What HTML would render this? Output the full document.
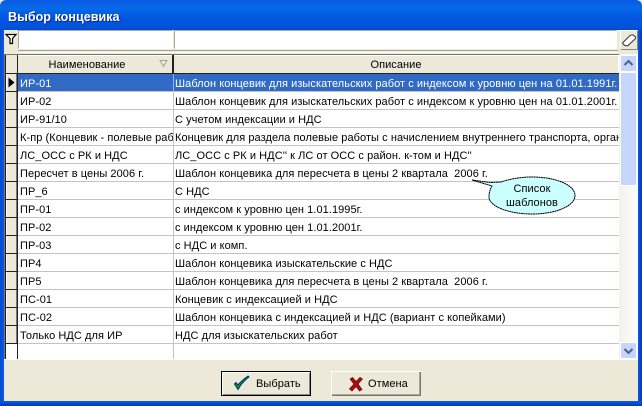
<!DOCTYPE html>
<html><head><meta charset="utf-8">
<style>
html,body{margin:0;padding:0;width:642px;height:406px;overflow:hidden;background:#ece9d8}
*{box-sizing:border-box}
body{position:relative;font:11px "Liberation Sans",sans-serif;letter-spacing:.06px;color:#000}
div{position:absolute}
.t{white-space:nowrap;overflow:hidden;height:18px;line-height:20px}
.a{left:20px;width:153px}
.b{left:175px;width:444px}
.l{left:18px;width:601px;height:1px;background:#c4c4c4}
.i{left:6px;width:11px;height:17px;background:#ece9d8;border-right:1px solid #777;border-left:1px solid #fff}
.k{left:5px;width:13px;height:1px;background:#222}
</style></head><body>
<div style="left:0;top:0;width:642px;height:30px;background:linear-gradient(#0a5ae0 0,#0a5fe8 3px,#046be8 8px,#0355e0 18px,#0252dc 27px,#0349cc 30px);border-radius:6px 6px 0 0"></div>
<div style="left:0;top:30px;width:4px;height:376px;background:linear-gradient(90deg,#0048c8,#0a5ae8)"></div>
<div style="left:638px;top:30px;width:4px;height:376px;background:linear-gradient(90deg,#0a5ae8,#0038b0)"></div>
<div style="left:0;top:401px;width:642px;height:5px;background:linear-gradient(#0a5ae8,#0038b0)"></div>
<div style="left:8px;top:8px;font:bold 12.5px 'Liberation Sans',sans-serif;color:#fff;text-shadow:1px 1px 0 #0a2a90;line-height:18px">Выбор концевика</div>

<svg style="position:absolute;left:4px;top:31px" width="14" height="16"><path d="M2 3.5H12L8.5 7.5V12.5H6V7.5Z" fill="#fff" stroke="#000" stroke-width="1.2"/></svg>
<div style="left:18px;top:30px;width:155px;height:19px;background:#fff;border:1px solid;border-color:#aca899 #fff #fff #aca899"></div>
<div style="left:174px;top:30px;width:443px;height:19px;background:#fff;border:1px solid;border-color:#aca899 #fff #fff #aca899"></div>
<div style="left:18px;top:50px;width:600px;height:3px;border-top:1px solid #aca899;border-bottom:1px solid #fff"></div>
<div style="left:620px;top:30px;width:18px;height:20px;background:#ece9d8;border:1px solid;border-color:#fff #888 #888 #fff"></div>
<svg style="position:absolute;left:621px;top:32px" width="17" height="16"><path d="M1.5 11L9 3.5Q10.5 2.5 12 3L14.5 5Q15 6 14 7L7 13.5Q5.5 14 4 13.5L2 12Z" fill="#fff" stroke="#333" stroke-width="1"/></svg>

<div style="left:4px;top:54px;width:634px;height:306px;background:#fff"></div>
<div style="left:4px;top:54px;width:615px;height:1px;background:#777"></div>
<div style="left:4px;top:54px;width:1px;height:305px;background:#777"></div>
<div style="left:5px;top:55px;width:1px;height:304px;background:#222"></div>
<div style="left:17px;top:55px;width:1px;height:304px;background:#222"></div>
<div style="left:173px;top:55px;width:1px;height:304px;background:#c4c4c4"></div>
<div style="left:6px;top:55px;width:11px;height:18px;background:#ece9d8"></div>
<div style="left:18px;top:55px;width:600px;height:18px;background:#ece9d8;border-top:1px solid #fff"></div>
<div style="left:5px;top:73px;width:614px;height:1px;background:#222"></div>
<div style="left:172px;top:55px;width:2px;height:18px;background:#222"></div>
<div style="left:18px;top:55px;width:154px;height:18px;line-height:21px;text-align:center;padding-right:16px">Наименование</div>
<div style="left:174px;top:55px;width:444px;height:18px;line-height:21px;text-align:center">Описание</div>
<svg style="position:absolute;left:159px;top:59px" width="10" height="9"><path d="M1 1.5H8L4.5 7.5Z" fill="none" stroke="#a8a498"/></svg>

<div style="left:18px;top:74px;width:601px;height:17px;background:#316ac5"></div>
<div style="left:173px;top:74px;width:1px;height:17px;background:#9ab4de"></div>

<div class="l" style="top:91px"></div><div class="l" style="top:109px"></div><div class="l" style="top:127px"></div><div class="l" style="top:145px"></div><div class="l" style="top:163px"></div><div class="l" style="top:181px"></div><div class="l" style="top:199px"></div><div class="l" style="top:217px"></div><div class="l" style="top:235px"></div><div class="l" style="top:253px"></div><div class="l" style="top:271px"></div><div class="l" style="top:289px"></div><div class="l" style="top:307px"></div><div class="l" style="top:325px"></div><div class="l" style="top:343px"></div>

<div class="i" style="top:74px"></div><div class="i" style="top:92px"></div><div class="i" style="top:110px"></div><div class="i" style="top:128px"></div><div class="i" style="top:146px"></div><div class="i" style="top:164px"></div><div class="i" style="top:182px"></div><div class="i" style="top:200px"></div><div class="i" style="top:218px"></div><div class="i" style="top:236px"></div><div class="i" style="top:254px"></div><div class="i" style="top:272px"></div><div class="i" style="top:290px"></div><div class="i" style="top:308px"></div><div class="i" style="top:326px"></div>
<div class="k" style="top:91px"></div><div class="k" style="top:109px"></div><div class="k" style="top:127px"></div><div class="k" style="top:145px"></div><div class="k" style="top:163px"></div><div class="k" style="top:181px"></div><div class="k" style="top:199px"></div><div class="k" style="top:217px"></div><div class="k" style="top:235px"></div><div class="k" style="top:253px"></div><div class="k" style="top:271px"></div><div class="k" style="top:289px"></div><div class="k" style="top:307px"></div><div class="k" style="top:325px"></div><div class="k" style="top:343px"></div>
<svg style="position:absolute;left:8px;top:77px" width="8" height="12"><path d="M0.5 0.5L6.5 5.5L0.5 10.5Z" fill="#000"/></svg>

<div class="t a" style="top:74px;color:#fff">ИР-01</div><div class="t b" style="top:74px;color:#fff">Шаблон концевик для изыскательских работ с индексом к уровню цен на 01.01.1991г.</div>
<div class="t a" style="top:92px">ИР-02</div><div class="t b" style="top:92px">Шаблон концевик для изыскательских работ с индексом к уровню цен на 01.01.2001г.</div>
<div class="t a" style="top:110px">ИР-91/10</div><div class="t b" style="top:110px">С учетом индексации и НДС</div>
<div class="t a" style="top:128px">К-пр (Концевик - полевые работы</div><div class="t b" style="top:128px">Концевик для раздела полевые работы с начислением внутреннего транспорта, организации</div>
<div class="t a" style="top:146px">ЛС_ОСС с РК и НДС</div><div class="t b" style="top:146px">ЛС_ОСС с РК и НДС'' к ЛС от ОСС с район. к-том и НДС''</div>
<div class="t a" style="top:164px">Пересчет в цены 2006 г.</div><div class="t b" style="top:164px">Шаблон концевика для пересчета в цены 2 квартала&nbsp; 2006 г.</div>
<div class="t a" style="top:182px">ПР_6</div><div class="t b" style="top:182px">С НДС</div>
<div class="t a" style="top:200px">ПР-01</div><div class="t b" style="top:200px">с индексом к уровню цен 1.01.1995г.</div>
<div class="t a" style="top:218px">ПР-02</div><div class="t b" style="top:218px">с индексом к уровню цен 1.01.2001г.</div>
<div class="t a" style="top:236px">ПР-03</div><div class="t b" style="top:236px">с НДС и комп.</div>
<div class="t a" style="top:254px">ПР4</div><div class="t b" style="top:254px">Шаблон концевика изыскательские с НДС</div>
<div class="t a" style="top:272px">ПР5</div><div class="t b" style="top:272px">Шаблон концевика для пересчета в цены 2 квартала&nbsp; 2006 г.</div>
<div class="t a" style="top:290px">ПС-01</div><div class="t b" style="top:290px">Концевик с индексацией и НДС</div>
<div class="t a" style="top:308px">ПС-02</div><div class="t b" style="top:308px">Шаблон концевика с индексацией и НДС (вариант с копейками)</div>
<div class="t a" style="top:326px">Только НДС для ИР</div><div class="t b" style="top:326px">НДС для изыскательских работ</div>

<div style="left:619px;top:54px;width:19px;height:306px;background:linear-gradient(90deg,#f3f1ec,#fdfdfa)"></div>
<div style="left:620px;top:55px;width:17px;height:17px;background:#c6d5fb;border:1px solid #fff;border-radius:2px"></div>
<svg style="position:absolute;left:620px;top:55px" width="17" height="17"><path d="M4.5 10L8.5 6L12.5 10" fill="none" stroke="#4d6185" stroke-width="2"/></svg>
<div style="left:620px;top:72px;width:17px;height:114px;background:#c6d5fb;border:1px solid #fff;border-radius:2px"></div>
<div style="left:620px;top:342px;width:17px;height:17px;background:#c6d5fb;border:1px solid #fff;border-radius:2px"></div>
<svg style="position:absolute;left:620px;top:342px" width="17" height="17"><path d="M4.5 7L8.5 11L12.5 7" fill="none" stroke="#4d6185" stroke-width="2"/></svg>

<div style="left:4px;top:359px;width:634px;height:1px;background:#fff"></div>

<svg style="position:absolute;left:470px;top:175px" width="110" height="42">
<path d="M2 5L20 7.5L31 7Q46 2 62 2C86 2 105 10 105 20.5C105 31 86 39 62 39C38 39 19 31 19 22Q19 16 22 11Z" fill="#ccffff" stroke="#000" stroke-width="1" stroke-dasharray="2 .4"/>
</svg>
<div style="left:489px;top:182px;width:86px;text-align:center;line-height:14px">Список<br>шаблонов</div>

<div style="left:221px;top:371px;width:90px;height:25px;background:#ece9d8;border:1px solid #000;box-shadow:inset 1px 1px 0 #fff,inset -1px -1px 0 #888"></div>
<svg style="position:absolute;left:233px;top:375px" width="18" height="17"><path d="M1.5 9L5 14.5Q9 7 16 2L15 1Q9 5 5 10L3 7.5Z" fill="#00a010" stroke="#002a80" stroke-width="1"/></svg>
<div style="left:256px;top:375px;line-height:19px">Выбрать</div>
<div style="left:331px;top:371px;width:90px;height:25px;background:#ece9d8;box-shadow:inset 1px 1px 0 #fff,inset -1px -1px 0 #777,inset -2px -2px 0 #aca899"></div>
<svg style="position:absolute;left:348px;top:376px" width="16" height="16"><path d="M2 3L4.5 1.5L8 5.5L12 1.5L14.5 3L10 8L14 13.5L11.5 15L8 10.5L4 15L1.5 13L6 8Z" fill="#a80f0f" stroke="#6a0808" stroke-width=".7"/></svg>
<div style="left:368px;top:375px;line-height:19px">Отмена</div>
</body></html>
